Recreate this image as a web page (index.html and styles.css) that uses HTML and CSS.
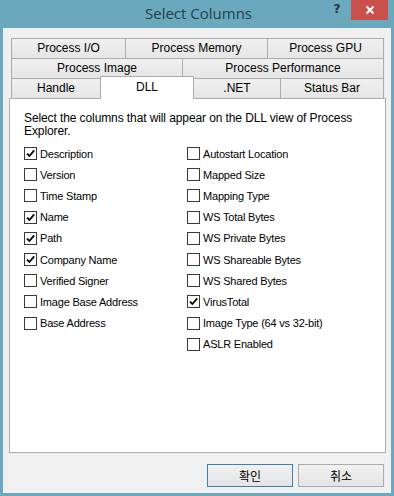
FILE: index.html
```html
<!DOCTYPE html>
<html>
<head>
<meta charset="utf-8">
<link rel="stylesheet" href="styles.css">
</head>
<body>
<div class="window">
  <div class="titlebar">
    <div class="tb-left"></div>
    <div class="title">Select Columns</div>
    <div class="tb-right">
      <span class="help">?</span>
      <span class="close"><svg width="10" height="10" viewBox="0 0 10 10"><path d="M1.5 1.5 L8.5 8.5 M8.5 1.5 L1.5 8.5" stroke="#fff" stroke-width="2"/></svg></span>
    </div>
  </div>
  <div class="client">
    <div class="tabs">
      <div class="row">
        <div class="tab w114">Process I/O</div>
        <div class="tab w142">Process Memory</div>
        <div class="tab fill">Process GPU</div>
      </div>
      <div class="row">
        <div class="tab w171">Process Image</div>
        <div class="tab fill">Process Performance</div>
      </div>
      <div class="row">
        <div class="tab w89">Handle</div>
        <div class="tab sel">DLL</div>
        <div class="tab w87">.NET</div>
        <div class="tab fill">Status Bar</div>
      </div>
    </div>
    <div class="panel">
      <p class="intro">Select the columns that will appear on the DLL view of Process Explorer.</p>
      <div class="cols">
        <div class="col">
          <label class="cb"><span class="box on"><svg viewBox="0 0 11 11"><path d="M2 5.6 L4.4 8 L9.2 2.4"/></svg></span>Description</label>
          <label class="cb"><span class="box"></span>Version</label>
          <label class="cb"><span class="box"></span>Time Stamp</label>
          <label class="cb"><span class="box on"><svg viewBox="0 0 11 11"><path d="M2 5.6 L4.4 8 L9.2 2.4"/></svg></span>Name</label>
          <label class="cb"><span class="box on"><svg viewBox="0 0 11 11"><path d="M2 5.6 L4.4 8 L9.2 2.4"/></svg></span>Path</label>
          <label class="cb"><span class="box on"><svg viewBox="0 0 11 11"><path d="M2 5.6 L4.4 8 L9.2 2.4"/></svg></span>Company Name</label>
          <label class="cb"><span class="box"></span>Verified Signer</label>
          <label class="cb"><span class="box"></span>Image Base Address</label>
          <label class="cb"><span class="box"></span>Base Address</label>
        </div>
        <div class="col">
          <label class="cb"><span class="box"></span>Autostart Location</label>
          <label class="cb"><span class="box"></span>Mapped Size</label>
          <label class="cb"><span class="box"></span>Mapping Type</label>
          <label class="cb"><span class="box"></span>WS Total Bytes</label>
          <label class="cb"><span class="box"></span>WS Private Bytes</label>
          <label class="cb"><span class="box"></span>WS Shareable Bytes</label>
          <label class="cb"><span class="box"></span>WS Shared Bytes</label>
          <label class="cb"><span class="box on"><svg viewBox="0 0 11 11"><path d="M2 5.6 L4.4 8 L9.2 2.4"/></svg></span>VirusTotal</label>
          <label class="cb"><span class="box"></span>Image Type (64 vs 32-bit)</label>
          <label class="cb"><span class="box"></span>ASLR Enabled</label>
        </div>
      </div>
    </div>
    <div class="buttons">
      <button class="btn default">확인</button>
      <button class="btn">취소</button>
    </div>
  </div>
</div>
</body>
</html>
```

FILE: styles.css
```css
html, body {
  margin: 0;
  padding: 0;
}
body {
  width: 394px;
  height: 496px;
  overflow: hidden;
  background: #69a8bd;
  font-family: "Liberation Sans", Arial, sans-serif;
}
.window {
  height: 496px;
  display: flex;
  flex-direction: column;
}
.titlebar {
  height: 28px;
  flex: none;
  display: grid;
  grid-template-columns: 1fr auto 1fr;
  align-items: start;
}
.title {
  font-family: "Open Sans", "Noto Sans", sans-serif;
  font-size: 15px;
  color: #23404d;
  line-height: 26px;
  padding-left: 3px;
}
.tb-right {
  display: flex;
  justify-content: flex-end;
  align-items: flex-start;
  padding-right: 6px;
}
.help {
  font-family: "DejaVu Sans", sans-serif;
  font-weight: bold;
  font-size: 12px;
  color: #26343c;
  width: 14px;
  text-align: center;
  line-height: 19px;
  margin-right: 7px;
}
.close {
  width: 37px;
  height: 20px;
  background: #c9504b;
  display: flex;
  align-items: center;
  justify-content: center;
}
.client {
  flex: 1;
  margin: 0 3px 3px 3px;
  background: #f0f0f0;
  padding: 10px 5px 0 6px;
  display: flex;
  flex-direction: column;
}
.tabs {
  margin: 0 2px 0 2px;
  position: relative;
  z-index: 1;
}
.row {
  display: flex;
  height: 20px;
  border-left: 1px solid #acacac;
}
.tab {
  box-sizing: border-box;
  height: 20px;
  border-top: 1px solid #acacac;
  border-right: 1px solid #acacac;
  background: linear-gradient(#f0f0f0, #e5e5e5);
  font-size: 12px;
  color: #000;
  text-align: center;
  line-height: 19px;
  white-space: nowrap;
}
.w114 { width: 114px; }
.w142 { width: 142px; }
.w171 { width: 171px; }
.w89 { width: 89px; }
.w87 { width: 87px; }
.fill { flex: 1; }
.tab.sel {
  width: 94px;
  margin-left: -1px;
  margin-top: -2px;
  height: 23px;
  border-left: 1px solid #acacac;
  background: #fff;
  line-height: 20px;
  position: relative;
  z-index: 2;
}
.panel {
  height: 355px;
  box-sizing: border-box;
  border: 1px solid #adadad;
  background: #fff;
  padding: 13px 14px 0 14px;
}
.intro {
  margin: 0;
  font-size: 12px;
  line-height: 13px;
  color: #000;
  letter-spacing: -0.1px;
}
.cols {
  margin-top: 5px;
  display: grid;
  grid-template-columns: 163px 1fr;
}
.col {
  display: flex;
  flex-direction: column;
}
.cb {
  height: 21.2px;
  display: flex;
  align-items: center;
  gap: 3px;
  font-size: 11px;
  letter-spacing: -0.2px;
  color: #000;
  white-space: nowrap;
}
.box {
  width: 13px;
  height: 13px;
  box-sizing: border-box;
  border: 1px solid #3a3a3a;
  background: #fff;
  flex: none;
  display: flex;
}
.box svg {
  width: 11px;
  height: 11px;
}
.box svg path {
  fill: none;
  stroke: #000;
  stroke-width: 1.8;
}
.buttons {
  display: flex;
  justify-content: flex-end;
  gap: 5px;
  padding: 11px 2px 0 0;
}
.btn {
  width: 86px;
  height: 23px;
  box-sizing: border-box;
  border: 1px solid #acacac;
  background: linear-gradient(#f0f0f0, #e5e5e5);
  font-family: "Noto Sans CJK KR", sans-serif;
  font-size: 12px;
  color: #000;
  padding: 0;
}
.btn.default {
  border-color: #3c7fb1;
}
```
